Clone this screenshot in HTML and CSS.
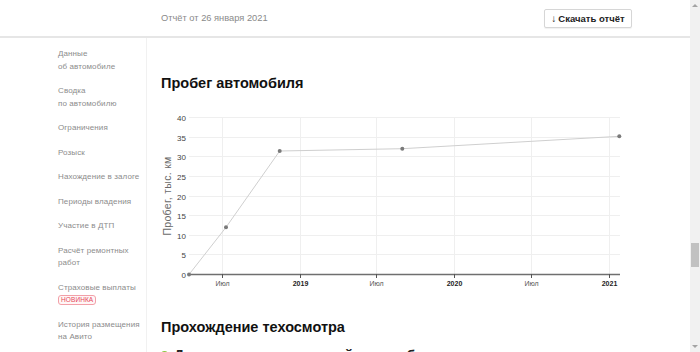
FILE: index.html
```html
<!DOCTYPE html>
<html>
  <head>
    <meta charset="UTF-8">
    <title>Отчёт об автомобиле</title>
    <link rel="stylesheet" href="styles.css">
  </head>
  <body>
    <div class="window">
      <div class="page">
        <!-- Report header -->
        <header class="report-header">
          <span class="report-date">Отчёт от 26 января 2021</span>
          <button class="download-btn"><span class="arrow">↓</span> Скачать отчёт</button>
        </header>

        <div class="report-body">
          <!-- Section navigation -->
          <nav class="sidebar">
            <a class="nav-item">Данные<br>об автомобиле</a>
            <a class="nav-item">Сводка<br>по автомобилю</a>
            <a class="nav-item">Ограничения</a>
            <a class="nav-item">Розыск</a>
            <a class="nav-item">Нахождение в залоге</a>
            <a class="nav-item">Периоды владения</a>
            <a class="nav-item">Участие в ДТП</a>
            <a class="nav-item">Расчёт ремонтных<br>работ</a>
            <a class="nav-item">Страховые выплаты<br><span class="badge">НОВИНКА</span></a>
            <a class="nav-item">История размещения<br>на Авито</a>
          </nav>

          <main class="content">
            <section class="section">
              <h2>Пробег автомобиля</h2>
              <svg class="chart" width="470" height="182" viewBox="0 0 470 182">
                <!-- grid -->
                <g class="grid">
                  <line x1="28" x2="459" y1="7.5" y2="7.5"/>
                  <line x1="28" x2="459" y1="27.5" y2="27.5"/>
                  <line x1="28" x2="459" y1="46.5" y2="46.5"/>
                  <line x1="28" x2="459" y1="66.5" y2="66.5"/>
                  <line x1="28" x2="459" y1="86.5" y2="86.5"/>
                  <line x1="28" x2="459" y1="105.5" y2="105.5"/>
                  <line x1="28" x2="459" y1="125.5" y2="125.5"/>
                  <line x1="28" x2="459" y1="144.5" y2="144.5"/>
                  <line x1="61.5" x2="61.5" y1="7.5" y2="164"/>
                  <line x1="139.5" x2="139.5" y1="7.5" y2="164"/>
                  <line x1="215.5" x2="215.5" y1="7.5" y2="164"/>
                  <line x1="293.5" x2="293.5" y1="7.5" y2="164"/>
                  <line x1="370.5" x2="370.5" y1="7.5" y2="164"/>
                  <line x1="448.5" x2="448.5" y1="7.5" y2="164"/>
                </g>
                <!-- axis -->
                <line class="axis" x1="28" x2="459" y1="164.5" y2="164.5"/>
                <g class="ticks">
                  <line x1="61.5" x2="61.5" y1="164" y2="168"/>
                  <line x1="139.5" x2="139.5" y1="164" y2="168"/>
                  <line x1="215.5" x2="215.5" y1="164" y2="168"/>
                  <line x1="293.5" x2="293.5" y1="164" y2="168"/>
                  <line x1="370.5" x2="370.5" y1="164" y2="168"/>
                  <line x1="448.5" x2="448.5" y1="164" y2="168"/>
                </g>
                <g class="y-labels">
                  <text x="25" y="10.5">40</text>
                  <text x="25" y="30.5">35</text>
                  <text x="25" y="49.5">30</text>
                  <text x="25" y="69.5">25</text>
                  <text x="25" y="89.5">20</text>
                  <text x="25" y="108.5">15</text>
                  <text x="25" y="128.5">10</text>
                  <text x="25" y="147.5">5</text>
                  <text x="25" y="167.5">0</text>
                </g>
                <g class="x-labels">
                  <text x="61.5" y="176">Июл</text>
                  <text class="year" x="139.5" y="176">2019</text>
                  <text x="215.5" y="176">Июл</text>
                  <text class="year" x="293.5" y="176">2020</text>
                  <text x="370.5" y="176">Июл</text>
                  <text class="year" x="448.5" y="176">2021</text>
                </g>
                <text class="y-title" transform="translate(10 86) rotate(-90)">Пробег, тыс. км</text>
                <!-- data -->
                <polyline class="series" points="28,164.5 65,117.3 118.7,41 241.3,38.7 458.3,26.3"/>
                <g class="points">
                  <circle cx="28" cy="164.5" r="2"/>
                  <circle cx="65" cy="117.3" r="2"/>
                  <circle cx="118.7" cy="41" r="2"/>
                  <circle cx="241.3" cy="38.7" r="2"/>
                  <circle cx="458.3" cy="26.3" r="2"/>
                </g>
              </svg>
            </section>

            <section class="section">
              <h2>Прохождение техосмотра</h2>
              <ul class="status-list">
                <li><span class="dot"></span>Данные о техосмотре найдены в базе</li>
              </ul>
            </section>
          </main>
        </div>
      </div>

      <!-- scrollbar of the window -->
      <div class="scrollbar">
        <span class="scroll-arrow up"></span>
        <span class="scroll-thumb"></span>
        <span class="scroll-arrow down"></span>
      </div>
    </div>
  </body>
</html>
```

FILE: styles.css
```css
* {
  box-sizing: border-box;
}
html, body {
  margin: 0;
  padding: 0;
  height: 352px;
  overflow: hidden;
}
body {
  font-family: 'Liberation Sans', Arial, sans-serif;
  background: #fff;
  color: #222;
}
.window {
  display: flex;
  height: 352px;
}
.page {
  flex: 1;
  display: flex;
  flex-direction: column;
  min-width: 0;
}
/* Header */
.report-header {
  height: 38px;
  flex-shrink: 0;
  display: flex;
  align-items: center;
  justify-content: space-between;
  padding: 0 58px 0 161px;
  border-bottom: 2px solid #e6e6e6;
}
.report-date {
  font-size: 9.3px;
  color: #8a8a8a;
  margin-top: -1px;
}
.download-btn {
  height: 19px;
  width: 88px;
  padding: 0;
  background: #fff;
  border: 1px solid #d6d6d6;
  border-radius: 2px;
  box-shadow: 0 1px 1px rgba(0, 0, 0, 0.06);
  font-family: inherit;
  font-size: 9.5px;
  font-weight: 600;
  color: #222;
  display: flex;
  align-items: center;
  justify-content: center;
  gap: 2px;
}
.download-btn .arrow {
  font-weight: 400;
  font-size: 10px;
}
/* Body */
.report-body {
  flex: 1;
  display: flex;
  min-height: 0;
}
.sidebar {
  width: 147px;
  flex-shrink: 0;
  padding: 10px 0 0 58px;
  border-right: 1px solid #f1f1f1;
  display: flex;
  flex-direction: column;
  gap: 12px;
}
.nav-item {
  font-size: 8px;
  line-height: 12.5px;
  color: #8c8c8c;
  letter-spacing: 0.1px;
}
.badge {
  display: inline-block;
  font-size: 6.5px;
  line-height: 8px;
  padding: 0 2px;
  color: #e5485a;
  background: #fff6f6;
  border: 1px solid #f2a0a8;
  border-radius: 3px;
  margin-top: 1px;
}
.content {
  flex: 1;
  padding: 36px 0 0 14px;
}
.section h2 {
  margin: 0;
  font-size: 14.5px;
  line-height: 18px;
  font-weight: 700;
  color: #111;
}
.chart {
  display: block;
  margin-top: 18px;
  font-family: 'Liberation Sans', Arial, sans-serif;
}
.grid line {
  stroke: #efefef;
  stroke-width: 1;
}
.axis {
  stroke: #6f6f6f;
  stroke-width: 1.5;
}
.ticks line {
  stroke: #555;
  stroke-width: 1;
}
.y-labels text {
  font-size: 8px;
  fill: #444;
  text-anchor: end;
}
.x-labels text {
  font-size: 7px;
  fill: #555;
  text-anchor: middle;
}
.x-labels .year {
  font-weight: 700;
  fill: #222;
}
.y-title {
  font-size: 10.5px;
  fill: #6a6a6a;
  text-anchor: middle;
  letter-spacing: 0.3px;
}
.series {
  fill: none;
  stroke: #cfcfcf;
  stroke-width: 1;
}
.points circle {
  fill: #7a7a7a;
}
.section + .section {
  margin-top: 26px;
}
.status-list {
  list-style: none;
  margin: 11px 0 0;
  padding: 0;
}
.status-list li {
  display: flex;
  align-items: flex-start;
  gap: 6px;
  font-size: 14px;
  line-height: 16px;
  font-weight: 700;
}
.dot {
  width: 7px;
  height: 7px;
  margin-top: 4px;
  border-radius: 50%;
  background: #8cc63f;
}
/* Fake window scrollbar */
.scrollbar {
  width: 10px;
  flex-shrink: 0;
  background: #f1f1f1;
  position: relative;
}
.scroll-thumb {
  position: absolute;
  left: 1px;
  right: 1px;
  top: 243px;
  height: 24px;
  background: #c1c1c1;
}
.scroll-arrow {
  position: absolute;
  left: 2px;
  width: 0;
  height: 0;
  border-left: 3px solid transparent;
  border-right: 3px solid transparent;
}
.scroll-arrow.up {
  top: 4px;
  border-bottom: 3px solid #a3a3a3;
}
.scroll-arrow.down {
  bottom: 4px;
  border-top: 3px solid #a3a3a3;
}
```
